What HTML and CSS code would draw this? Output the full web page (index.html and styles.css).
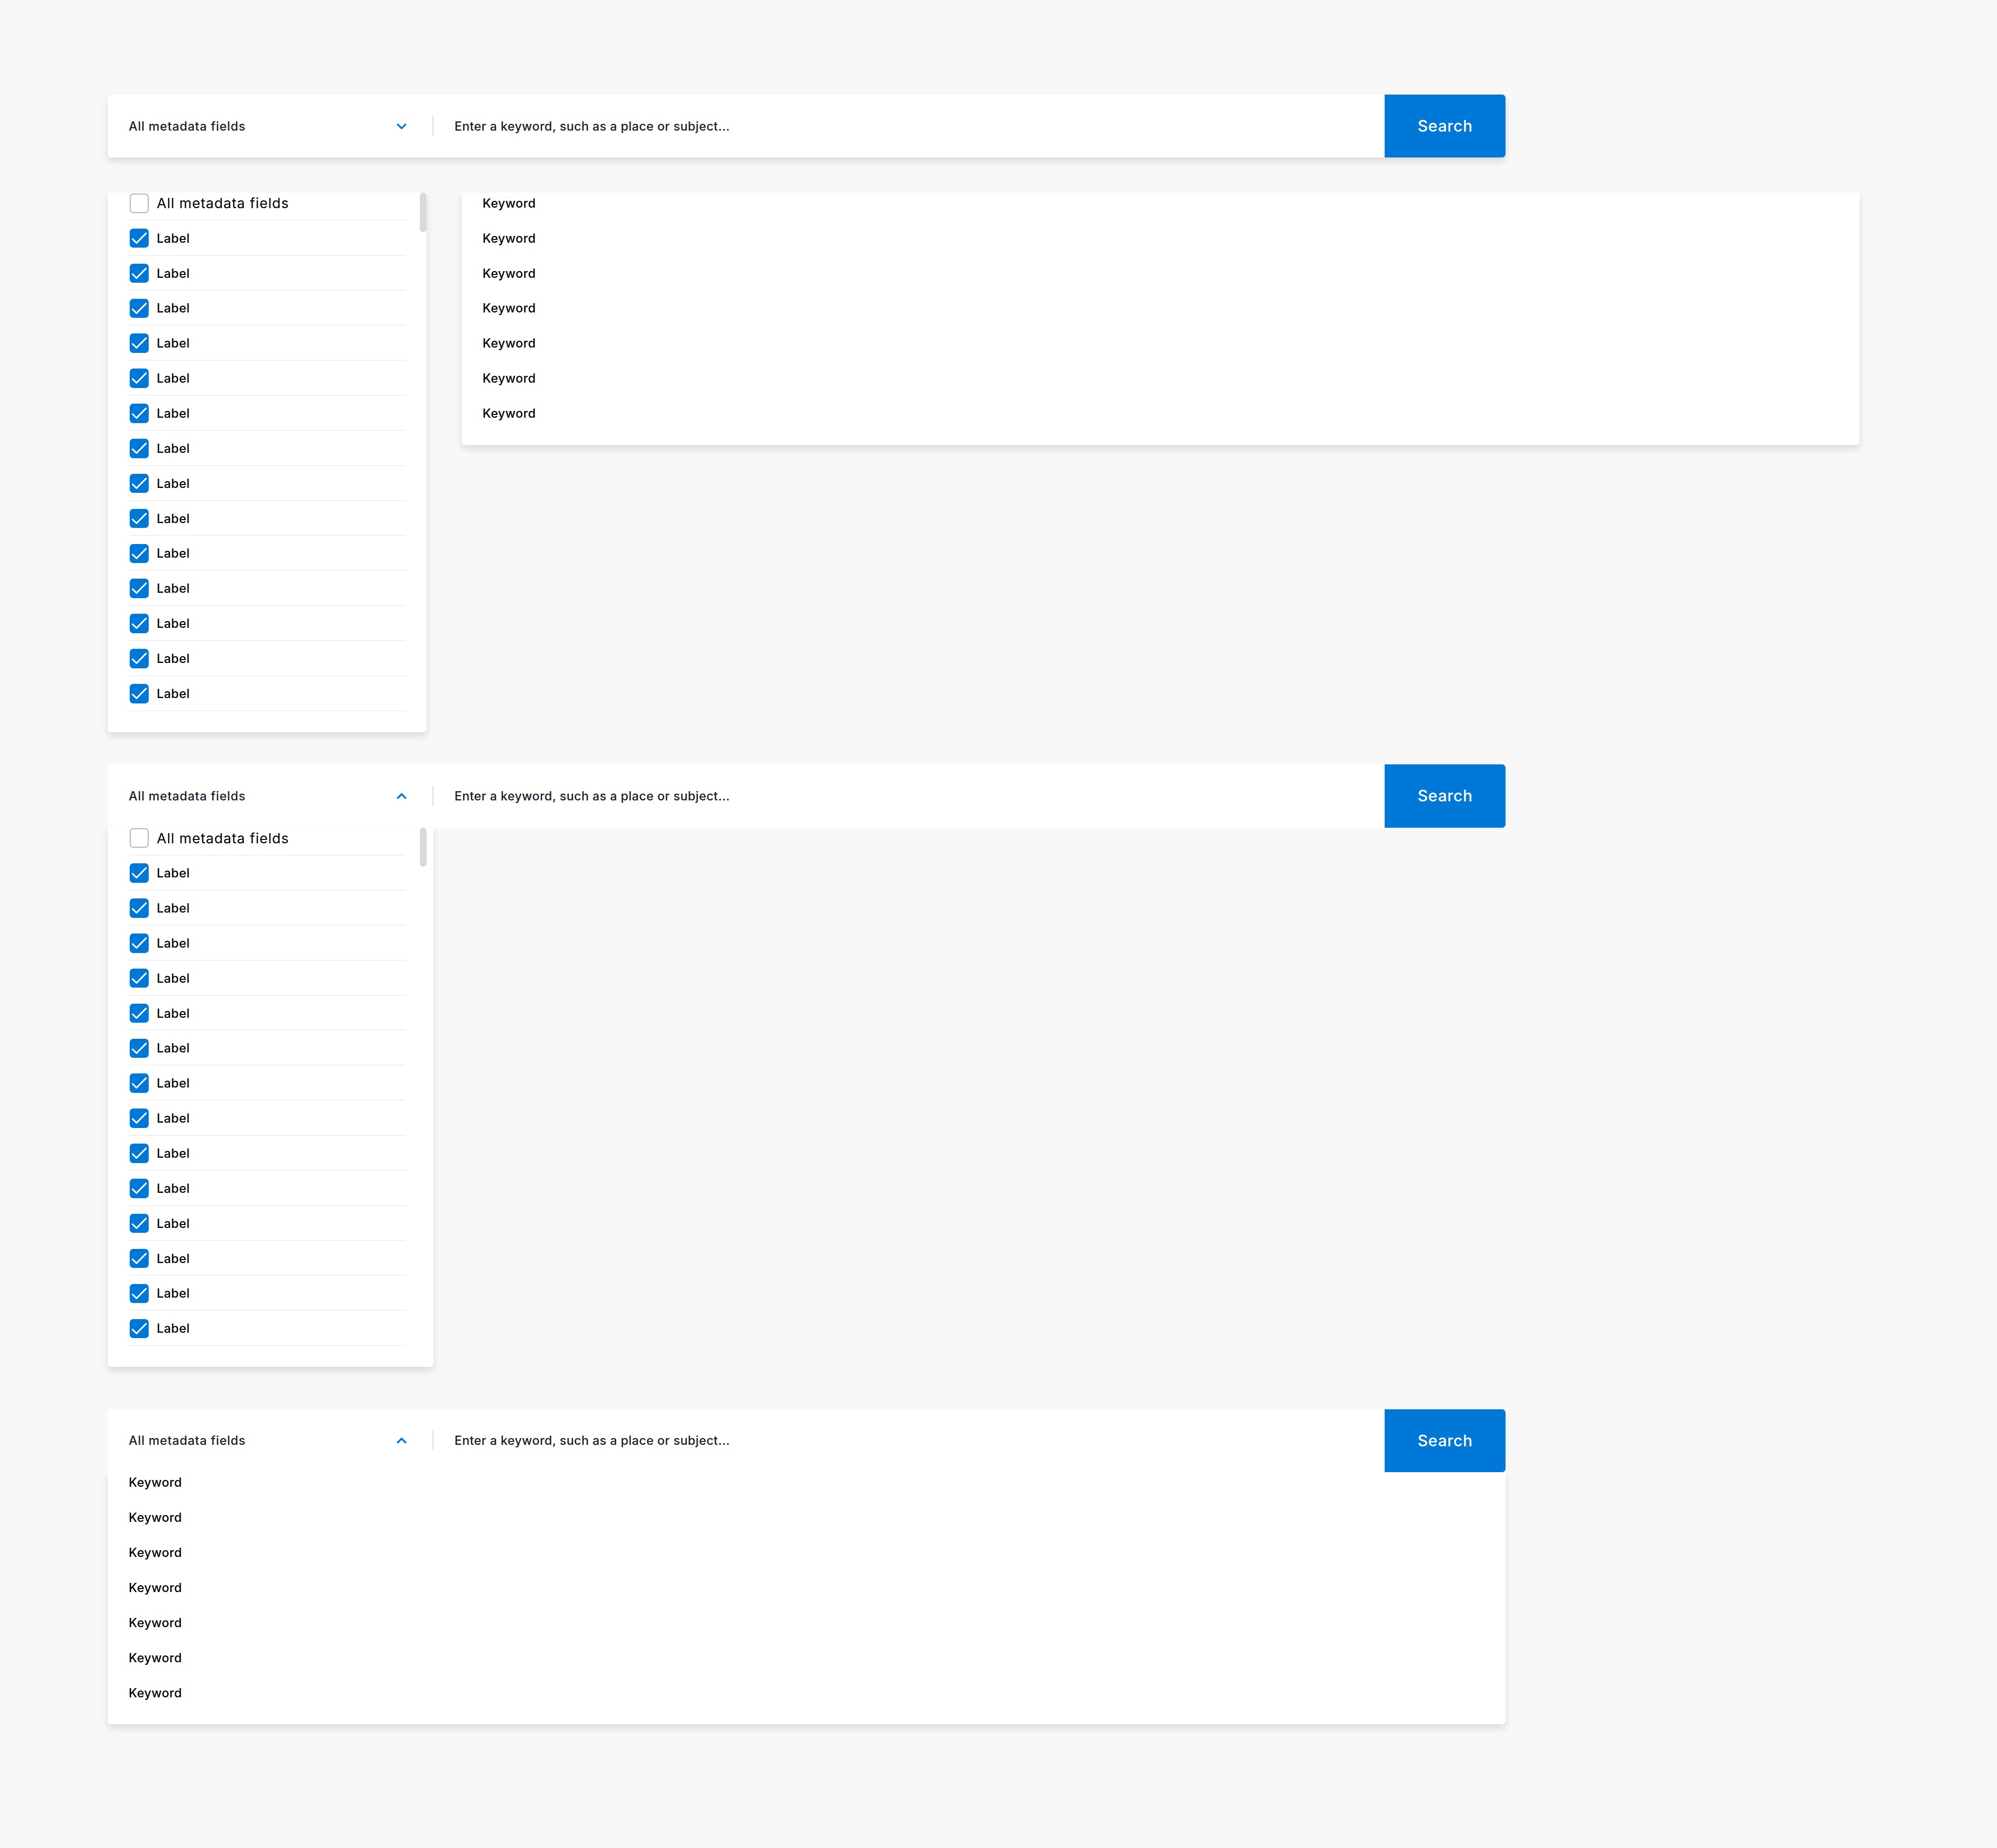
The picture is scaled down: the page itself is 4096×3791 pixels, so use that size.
FILE: index.html
```
<!DOCTYPE html>
<html>
<head>
  <meta charset="UTF-8" />
  <title>Search bar</title>
  <link rel="stylesheet" href="styles.css">
</head>
<body>

<section class="closed">
  <div class="search-bar shadow">
    <div class="select">
      <span class="select-text">All metadata fields</span>
      <svg class="chevron" viewBox="0 0 24 16"><path d="M2 2.5 L12 12.5 L22 2.5" /></svg>
    </div>
    <div class="query">Enter a keyword, such as a place or subject...</div>
    <button class="search-btn">Search</button>
  </div>
</section>

<section class="menus">
  <div class="menu fields">
    <ul class="field-list"></ul>
    <div class="scrollbar"></div>
  </div>
  <div class="menu keywords">
    <ul class="keyword-list"></ul>
  </div>
</section>

<section class="fields-open">
  <div class="search-bar">
    <div class="select">
      <span class="select-text">All metadata fields</span>
      <svg class="chevron" viewBox="0 0 24 16"><path d="M2 13.5 L12 3.5 L22 13.5" /></svg>
    </div>
    <div class="query">Enter a keyword, such as a place or subject...</div>
    <button class="search-btn">Search</button>
  </div>
  <div class="menu fields wide">
    <ul class="field-list"></ul>
    <div class="scrollbar"></div>
  </div>
</section>

<section class="keywords-open">
  <div class="search-bar">
    <div class="select">
      <span class="select-text">All metadata fields</span>
      <svg class="chevron" viewBox="0 0 24 16"><path d="M2 13.5 L12 3.5 L22 13.5" /></svg>
    </div>
    <div class="query">Enter a keyword, such as a place or subject...</div>
    <button class="search-btn">Search</button>
  </div>
  <div class="menu keywords">
    <ul class="keyword-list"></ul>
  </div>
</section>

<script>
const check = '<svg class="box checked" viewBox="0 0 44 44"><path d="M6.7 24 L15.6 32.8 L37.3 10.7" /></svg>';

document.querySelectorAll(".field-list").forEach(list => {
  let rows = '<li class="field all"><span class="box"></span>All metadata fields</li>';
  for (let i = 0; i < 14; i++) {
    rows += `<li class="field">${check}<span>Label</span></li>`;
  }
  list.innerHTML = rows;
});

document.querySelectorAll(".keyword-list").forEach(list => {
  list.innerHTML = '<li class="keyword">Keyword</li>'.repeat(7);
});
</script>

</body>
</html>
```
FILE: styles.css
```
/* 1rem = 10 units of the 4560 wide artboard */
html { font-size: 0.2192982vw; }
* { box-sizing: border-box; }
body {
  margin: 0;
  padding: 21.6rem 0 0 24.6rem;
  height: 100vh;
  overflow: hidden;
  background: #f8f8f8;
  font-family: Inter, "Liberation Sans", sans-serif;
  font-size: 2.8rem;
  font-weight: 500;
  color: #000;
}
ul { list-style: none; margin: 0; padding: 0; }

/* search bar */
.search-bar {
  display: flex;
  align-items: center;
  width: 319.2rem;
  height: 14.4rem;
  background: #fff;
  border-radius: 0.8rem;
  color: #1a1c2b;
}
.select {
  display: flex;
  align-items: center;
  justify-content: space-between;
  width: 74.4rem;
  height: 4.6rem;
  padding: 0 5.9rem 0 4.8rem;
  border-right: 2px solid #dadadb;
}
.select-text { letter-spacing: 0.1rem; }
.chevron { width: 2.4rem; height: 1.6rem; }
.chevron path { fill: none; stroke: #0078d7; stroke-width: 4; }
.query { flex: 1; padding-left: 4.8rem; letter-spacing: 0.053rem; }
.search-btn {
  width: 27.6rem;
  height: 100%;
  padding: 0;
  border: 0;
  border-radius: 0 0.8rem 0.8rem 0;
  background: #0078d7;
  color: #fff;
  font: inherit;
  font-size: 3.6rem;
  letter-spacing: 0.08rem;
}

/* dropdown menus */
.shadow, .menu { box-shadow: 0 0.8rem 1.6rem rgba(0, 0, 0, 0.12); }
.menu {
  position: relative;
  overflow: hidden;
  background: #fff;
  border-radius: 0 0 0.8rem 0.8rem;
}
.fields { width: 72.8rem; height: 123.2rem; }
.fields.wide { width: 74.4rem; }
.keywords { width: 319.2rem; height: 57.6rem; }
.field-list, .keyword-list { margin-top: -1.6rem; padding-left: 4.8rem; }
.field {
  display: flex;
  align-items: center;
  gap: 1.8rem;
  width: 63.2rem;
  height: 8rem;
  padding-left: 0.2rem;
  border-bottom: 2px solid #efeff0;
  padding-top: 2px;
  letter-spacing: 0.06rem;
}
.field.all { font-size: 3.2rem; font-weight: 400; letter-spacing: 0.12rem; }
.box { width: 4.4rem; height: 4.4rem; border-radius: 0.8rem; border: 2px solid #afb2b7; }
.box.checked { border: 0; background: #0078d7; }
.box.checked path {
  fill: none;
  stroke: #fff;
  stroke-width: 3.6;
  stroke-linecap: round;
  stroke-linejoin: round;
}
.keyword { display: flex; align-items: center; height: 8rem; letter-spacing: 0.06rem; }
.scrollbar {
  position: absolute;
  top: 0;
  right: 0;
  width: 1.6rem;
  height: 9rem;
  border-radius: 0.8rem;
  background: #d8d9db;
}
.wide .scrollbar { right: 1.6rem; }

/* spacing between the states */
.menus { display: flex; align-items: flex-start; gap: 8rem; margin: 8rem 0 7.4rem; }
.menus .menu { flex-shrink: 0; }
.keywords-open { margin-top: 9.6rem; }
/* bar stays above the shadow of its menu */
.keywords-open .search-bar { position: relative; z-index: 1; }
```
